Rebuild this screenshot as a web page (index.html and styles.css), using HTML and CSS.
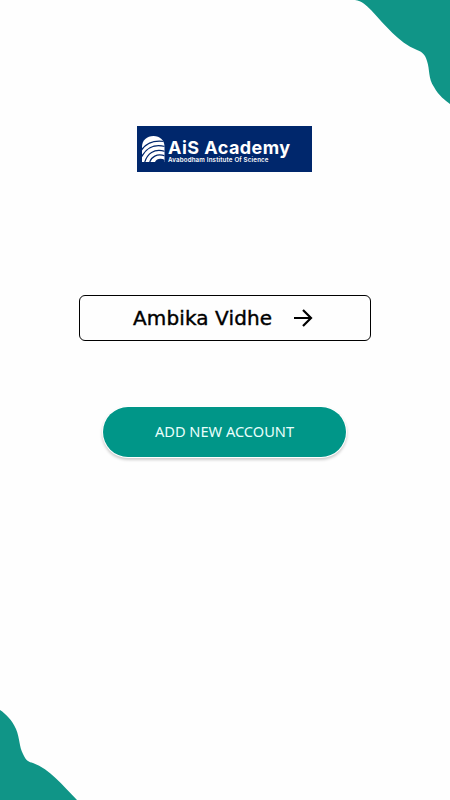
FILE: index.html
```html
<!DOCTYPE html>
<html lang="en">
<head>
<meta charset="utf-8">
<title>AiS Academy</title>
<link rel="stylesheet" href="styles.css">
</head>
<body>
<svg class="wave wave-top" viewBox="0 0 100 110" aria-hidden="true"><path d="M5 0C12 1 16 5 21 10C36 26 48 42 67 50C72 52 75 54 77 61C80 70 78 78 84 87C89 96 95 100 100 104V0Z"/></svg>
<svg class="wave wave-bottom" viewBox="0 0 90 100" aria-hidden="true"><path d="M0 10C6 14 12 20 16 29C20 39 19 46 23 54C26 61 29 62 33 63C50 69 62 85 77 100H0Z"/></svg>
<main class="screen">
  <div class="logo">
    <svg class="fan" viewBox="0 0 23 26" aria-hidden="true">
      <defs><clipPath id="dome"><path d="M0 26V11C0 4 5 0 11.500 0S22.500 4 22.500 11V26Z"/></clipPath></defs>
      <g clip-path="url(#dome)">
        <path class="fill" d="M0 0H23V26H0Z"/>
        <path class="stripe" d="M-1 15C3 8 10 3.500 23 5.500M-1 22C3 13 11 7.500 23 10.500M2.500 27C5 18 12 12 23 15.500M7.500 27C9 21 15 17 23 20"/>
        <path class="corner" d="M12.500 27C14 23 18 21.500 23 24V27Z"/>
      </g>
    </svg>
    <div class="brand">
      <span class="name">AiS Academy</span>
      <span class="tagline">Avabodham Institute Of Science</span>
    </div>
  </div>
  <button class="account">
    <span>Ambika Vidhe</span>
    <svg class="arrow" viewBox="0 0 20 18" aria-hidden="true"><path d="M1 9H18M10 1L18 9L10 17"/></svg>
  </button>
  <button class="add"><span>ADD NEW ACCOUNT</span></button>
</main>
</body>
</html>
```

FILE: styles.css
```css
* { box-sizing: border-box; }
body {
  margin: 0;
  height: 800px;
  position: relative;
  overflow: hidden;
  background: #fefefe;
}
.wave { position: absolute; display: block; fill: #109587; }
.wave-top { top: 0; right: 0; width: 100px; height: 110px; }
.wave-bottom { bottom: 0; left: 0; width: 90px; height: 100px; }
.screen {
  display: flex;
  flex-direction: column;
  align-items: center;
  padding-top: 126px;
}
.logo {
  display: flex;
  width: 175px;
  height: 46px;
  margin-right: 1px;
  padding: 10px 0 0 5px;
  background: #00276c;
  color: #fff;
  font-family: Inter, sans-serif;
}
.fan { width: 23px; height: 26px; flex: none; }
.fill { fill: #fff; }
.stripe { fill: none; stroke: #00276c; stroke-width: 1.2; }
.corner { fill: #00276c; }
.brand {
  display: flex;
  flex-direction: column;
  margin-left: 3px;
  padding-top: 3px;
  white-space: nowrap;
}
.name { font-size: 18px; line-height: 17px; font-weight: 700; letter-spacing: 0.45px; }
.tagline { font-size: 6.2px; line-height: 8px; font-weight: 600; letter-spacing: 0.16px; }
button { margin: 0; padding: 0; border: 0; }
.account {
  display: flex;
  align-items: center;
  width: 292px;
  height: 46px;
  margin-top: 123px;
  padding: 0 0 1px 53px;
  border: 1.5px solid #000;
  border-radius: 6px;
  background: #fefefe;
  color: #000;
  font: 20px/28px "DejaVu Sans", sans-serif;
  letter-spacing: 0.12px;
  -webkit-text-stroke: 0.4px #000;
}
.arrow {
  width: 20px;
  height: 18px;
  margin: 1px 0 0 21px;
  fill: none;
  stroke: #000;
  stroke-width: 2.2;
}
.add {
  width: 243px;
  height: 50px;
  margin: 66px 1px 0 0;
  padding-bottom: 2px;
  border-radius: 25px;
  background: #009688;
  box-shadow: 0 0 0 1px #fff, 0 2px 3px 1px rgba(0, 0, 0, 0.2);
  color: #e9fffc;
  font: 14.6px/20px "Noto Sans", sans-serif;
}
```
